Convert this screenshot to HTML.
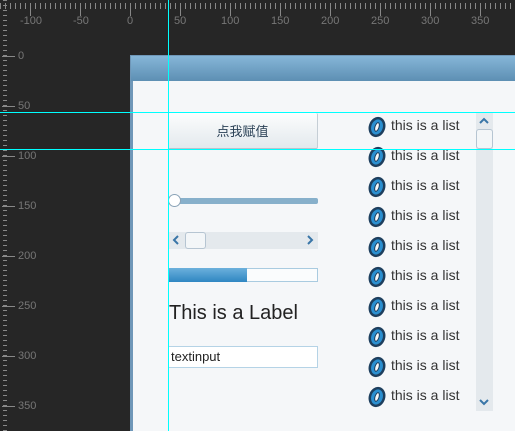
<!DOCTYPE html>
<html><head><meta charset="utf-8"><style>
body{margin:0;width:515px;height:431px;overflow:hidden;background:#262626;position:relative;font-family:"Liberation Sans","Noto Sans CJK SC",sans-serif}
.a{position:absolute}
.hr{left:0;top:0;width:515px;height:24px;background:repeating-linear-gradient(90deg,#888 0 1px,transparent 1px 5px);clip-path:inset(3px 0 15px 0)}
.vr{left:0;top:0;width:24px;height:431px;background:repeating-linear-gradient(180deg,#888 0 1px,transparent 1px 5px);clip-path:inset(0 17px 0 3px)}
.lt{color:#777;font-size:11px}
.tk{background:#888}
.row{left:367px;height:30px;width:110px}
.row span{position:absolute;left:24px;top:2px;font-size:14px;color:#333}
.row svg{position:absolute;left:0;top:1px}
</style></head><body>
<div class="a hr"></div>
<div class="a vr"></div>
<div class="a tk" style="left:30px;top:3px;width:1px;height:13px"></div>
<div class="a tk" style="left:80px;top:3px;width:1px;height:13px"></div>
<div class="a tk" style="left:130px;top:3px;width:1px;height:13px"></div>
<div class="a tk" style="left:180px;top:3px;width:1px;height:13px"></div>
<div class="a tk" style="left:230px;top:3px;width:1px;height:13px"></div>
<div class="a tk" style="left:280px;top:3px;width:1px;height:13px"></div>
<div class="a tk" style="left:330px;top:3px;width:1px;height:13px"></div>
<div class="a tk" style="left:380px;top:3px;width:1px;height:13px"></div>
<div class="a tk" style="left:430px;top:3px;width:1px;height:13px"></div>
<div class="a tk" style="left:480px;top:3px;width:1px;height:13px"></div>
<div class="a lt" style="left:20px;top:15px">-100</div>
<div class="a lt" style="left:73px;top:15px">-50</div>
<div class="a lt" style="left:127px;top:15px">0</div>
<div class="a lt" style="left:174px;top:15px">50</div>
<div class="a lt" style="left:221px;top:15px">100</div>
<div class="a lt" style="left:271px;top:15px">150</div>
<div class="a lt" style="left:321px;top:15px">200</div>
<div class="a lt" style="left:371px;top:15px">250</div>
<div class="a lt" style="left:421px;top:15px">300</div>
<div class="a lt" style="left:471px;top:15px">350</div>
<div class="a tk" style="left:2px;top:56px;width:13px;height:1px"></div>
<div class="a tk" style="left:2px;top:106px;width:13px;height:1px"></div>
<div class="a tk" style="left:2px;top:156px;width:13px;height:1px"></div>
<div class="a tk" style="left:2px;top:206px;width:13px;height:1px"></div>
<div class="a tk" style="left:2px;top:256px;width:13px;height:1px"></div>
<div class="a tk" style="left:2px;top:306px;width:13px;height:1px"></div>
<div class="a tk" style="left:2px;top:356px;width:13px;height:1px"></div>
<div class="a tk" style="left:2px;top:406px;width:13px;height:1px"></div>
<div class="a lt" style="left:18px;top:50px">0</div>
<div class="a lt" style="left:18px;top:100px">50</div>
<div class="a lt" style="left:18px;top:150px">100</div>
<div class="a lt" style="left:18px;top:200px">150</div>
<div class="a lt" style="left:18px;top:250px">200</div>
<div class="a lt" style="left:18px;top:300px">250</div>
<div class="a lt" style="left:18px;top:350px">300</div>
<div class="a lt" style="left:18px;top:400px">350</div>
<div class="a" style="left:130px;top:55px;width:385px;height:376px;background:#6f97b8"></div>
<div class="a" style="left:131px;top:56px;width:384px;height:25px;background:linear-gradient(#86b6d8,#5d8fb3)"></div>
<div class="a" style="left:133px;top:81px;width:382px;height:350px;background:#f5f7f9"></div>
<div class="a" style="left:168px;top:113px;width:149px;height:35px;background:linear-gradient(#fcfdfd,#e3e9ed);border-right:1px solid #c5ced5;border-bottom:1px solid #b8c3cb;border-radius:2px;text-align:center;line-height:37px;font-size:13px;color:#2c4257">点我赋值</div>
<div class="a" style="left:170px;top:198px;width:148px;height:6px;background:#87b0cb;border-radius:2px"></div>
<div class="a" style="left:168px;top:194px;width:13px;height:13px;border-radius:50%;background:#fff;border:1px solid #8aa3b7;box-sizing:border-box"></div>
<div class="a" style="left:168px;top:232px;width:150px;height:17px;background:#e4e9ed"></div>
<div class="a" style="left:185px;top:232px;width:21px;height:17px;background:#f3f6f8;border:1px solid #b6c5d2;border-radius:3px;box-sizing:border-box"></div>
<svg class="a" style="left:172px;top:235px" width="8" height="10"><path d="M6 1L2 5L6 9" stroke="#3a76a8" stroke-width="2" fill="none"/></svg>
<svg class="a" style="left:306px;top:235px" width="8" height="10"><path d="M2 1L6 5L2 9" stroke="#3a76a8" stroke-width="2" fill="none"/></svg>
<div class="a" style="left:168px;top:268px;width:150px;height:14px;background:#fafcfd;border:1px solid #a9cbe0;box-sizing:border-box"></div>
<div class="a" style="left:168px;top:268px;width:79px;height:14px;background:linear-gradient(#6cb0dc,#2f86c2)"></div>
<div class="a" style="left:169px;top:302px;font-size:20px;color:#222">This is a Label</div>
<div class="a" style="left:168px;top:346px;width:150px;height:22px;background:#fff;border:1px solid #b5d3e6;box-sizing:border-box;font-size:13px;line-height:20px;padding-left:2px;color:#222">textinput</div>
<div class="a row" style="top:115px"><svg width="20" height="22"><ellipse cx="10" cy="11" rx="7" ry="9" transform="rotate(18 10 11)" fill="#2a8fd0" stroke="#1d3f5e" stroke-width="2.5"/><ellipse cx="10" cy="11" rx="2" ry="4.5" transform="rotate(18 10 11)" fill="#f5f7f9" stroke="#1d3f5e"/></svg><span>this is a list</span></div>
<div class="a row" style="top:145px"><svg width="20" height="22"><ellipse cx="10" cy="11" rx="7" ry="9" transform="rotate(18 10 11)" fill="#2a8fd0" stroke="#1d3f5e" stroke-width="2.5"/><ellipse cx="10" cy="11" rx="2" ry="4.5" transform="rotate(18 10 11)" fill="#f5f7f9" stroke="#1d3f5e"/></svg><span>this is a list</span></div>
<div class="a row" style="top:175px"><svg width="20" height="22"><ellipse cx="10" cy="11" rx="7" ry="9" transform="rotate(18 10 11)" fill="#2a8fd0" stroke="#1d3f5e" stroke-width="2.5"/><ellipse cx="10" cy="11" rx="2" ry="4.5" transform="rotate(18 10 11)" fill="#f5f7f9" stroke="#1d3f5e"/></svg><span>this is a list</span></div>
<div class="a row" style="top:205px"><svg width="20" height="22"><ellipse cx="10" cy="11" rx="7" ry="9" transform="rotate(18 10 11)" fill="#2a8fd0" stroke="#1d3f5e" stroke-width="2.5"/><ellipse cx="10" cy="11" rx="2" ry="4.5" transform="rotate(18 10 11)" fill="#f5f7f9" stroke="#1d3f5e"/></svg><span>this is a list</span></div>
<div class="a row" style="top:235px"><svg width="20" height="22"><ellipse cx="10" cy="11" rx="7" ry="9" transform="rotate(18 10 11)" fill="#2a8fd0" stroke="#1d3f5e" stroke-width="2.5"/><ellipse cx="10" cy="11" rx="2" ry="4.5" transform="rotate(18 10 11)" fill="#f5f7f9" stroke="#1d3f5e"/></svg><span>this is a list</span></div>
<div class="a row" style="top:265px"><svg width="20" height="22"><ellipse cx="10" cy="11" rx="7" ry="9" transform="rotate(18 10 11)" fill="#2a8fd0" stroke="#1d3f5e" stroke-width="2.5"/><ellipse cx="10" cy="11" rx="2" ry="4.5" transform="rotate(18 10 11)" fill="#f5f7f9" stroke="#1d3f5e"/></svg><span>this is a list</span></div>
<div class="a row" style="top:295px"><svg width="20" height="22"><ellipse cx="10" cy="11" rx="7" ry="9" transform="rotate(18 10 11)" fill="#2a8fd0" stroke="#1d3f5e" stroke-width="2.5"/><ellipse cx="10" cy="11" rx="2" ry="4.5" transform="rotate(18 10 11)" fill="#f5f7f9" stroke="#1d3f5e"/></svg><span>this is a list</span></div>
<div class="a row" style="top:325px"><svg width="20" height="22"><ellipse cx="10" cy="11" rx="7" ry="9" transform="rotate(18 10 11)" fill="#2a8fd0" stroke="#1d3f5e" stroke-width="2.5"/><ellipse cx="10" cy="11" rx="2" ry="4.5" transform="rotate(18 10 11)" fill="#f5f7f9" stroke="#1d3f5e"/></svg><span>this is a list</span></div>
<div class="a row" style="top:355px"><svg width="20" height="22"><ellipse cx="10" cy="11" rx="7" ry="9" transform="rotate(18 10 11)" fill="#2a8fd0" stroke="#1d3f5e" stroke-width="2.5"/><ellipse cx="10" cy="11" rx="2" ry="4.5" transform="rotate(18 10 11)" fill="#f5f7f9" stroke="#1d3f5e"/></svg><span>this is a list</span></div>
<div class="a row" style="top:385px"><svg width="20" height="22"><ellipse cx="10" cy="11" rx="7" ry="9" transform="rotate(18 10 11)" fill="#2a8fd0" stroke="#1d3f5e" stroke-width="2.5"/><ellipse cx="10" cy="11" rx="2" ry="4.5" transform="rotate(18 10 11)" fill="#f5f7f9" stroke="#1d3f5e"/></svg><span>this is a list</span></div>
<div class="a" style="left:476px;top:113px;width:17px;height:298px;background:#e4e9ed"></div>
<div class="a" style="left:476px;top:129px;width:17px;height:20px;background:#f3f6f8;border:1px solid #b6c5d2;border-radius:3px;box-sizing:border-box"></div>
<svg class="a" style="left:479px;top:117px" width="10" height="8"><path d="M1 6L5 2L9 6" stroke="#3a76a8" stroke-width="2" fill="none"/></svg>
<svg class="a" style="left:479px;top:398px" width="10" height="8"><path d="M1 2L5 6L9 2" stroke="#3a76a8" stroke-width="2" fill="none"/></svg>
<div class="a" style="left:168px;top:0;width:1px;height:431px;background:#00ffff"></div>
<div class="a" style="left:0;top:112px;width:515px;height:1px;background:#00ffff"></div>
<div class="a" style="left:0;top:149px;width:515px;height:1px;background:#00ffff"></div>
</body></html>
